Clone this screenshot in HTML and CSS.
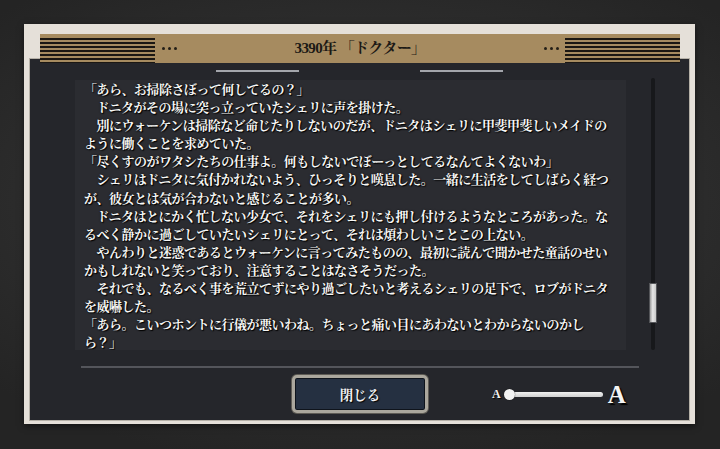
FILE: index.html
```html
<!DOCTYPE html>
<html lang="ja">
<head>
<meta charset="utf-8">
<title>3390年 「ドクター」</title>
<link rel="stylesheet" href="styles.css">
</head>
<body>
<div class="panel">
  <div class="header">
    <div class="stripes"></div>
    <div class="dots"><i></i><i></i><i></i></div>
    <div class="title">3390年 「ドクター」</div>
    <div class="dots"><i></i><i></i><i></i></div>
    <div class="stripes"></div>
  </div>
  <div class="inner">
    <div class="tabs"><span></span><span></span></div>
    <div class="content">
      <div class="textbox">
        <p class="line">「あら、お掃除さぼって何してるの？」</p>
        <p class="line">　ドニタがその場に突っ立っていたシェリに声を掛けた。</p>
        <p class="line">　別にウォーケンは掃除など命じたりしないのだが、ドニタはシェリに甲斐甲斐しいメイドの</p>
        <p class="line">ように働くことを求めていた。</p>
        <p class="line">「尽くすのがワタシたちの仕事よ。何もしないでぼーっとしてるなんてよくないわ」</p>
        <p class="line">　シェリはドニタに気付かれないよう、ひっそりと嘆息した。一緒に生活をしてしばらく経つ</p>
        <p class="line">が、彼女とは気が合わないと感じることが多い。</p>
        <p class="line">　ドニタはとにかく忙しない少女で、それをシェリにも押し付けるようなところがあった。な</p>
        <p class="line">るべく静かに過ごしていたいシェリにとって、それは煩わしいことこの上ない。</p>
        <p class="line">　やんわりと迷惑であるとウォーケンに言ってみたものの、最初に読んで聞かせた童話のせい</p>
        <p class="line">かもしれないと笑っており、注意することはなさそうだった。</p>
        <p class="line">　それでも、なるべく事を荒立てずにやり過ごしたいと考えるシェリの足下で、ロブがドニタ</p>
        <p class="line">を威嚇した。</p>
        <p class="line">「あら。こいつホントに行儀が悪いわね。ちょっと痛い目にあわないとわからないのかし</p>
        <p class="line">ら？」</p>
      </div>
      <div class="scroll"><div class="thumb"></div></div>
    </div>
    <div class="sep"></div>
    <div class="controls">
      <button class="close">閉じる</button>
      <div class="fontsize">
        <span class="a-small">A</span>
        <div class="slider"><span class="knob"></span><span class="bar"></span></div>
        <span class="a-large">A</span>
      </div>
    </div>
  </div>
</div>
</body>
</html>
```
FILE: styles.css
```css
html, body {
  margin: 0;
  padding: 0;
}
body {
  width: 720px;
  height: 449px;
  overflow: hidden;
  background: radial-gradient(ellipse 70% 60% at 50% 45%, #3a3a3a 0%, #2e2e2e 55%, #242424 100%);
  padding: 24px 0 0 24px;
  box-sizing: border-box;
  font-family: "Noto Serif CJK JP", "Noto Sans CJK JP", serif;
}
.panel {
  width: 671px;
  height: 400px;
  box-sizing: border-box;
  background: #e5e0d9;
  padding: 10px 6px 4px 6px;
  box-shadow: 0 2px 6px rgba(0,0,0,0.5);
}
.header {
  position: relative;
  z-index: 1;
  margin: 0 9px 0 10px;
  height: 29px;
  background: #a68b60;
  display: flex;
  align-items: center;
}
.stripes {
  width: 115px;
  height: 29px;
  box-sizing: border-box;
  padding-top: 3px;
  background: repeating-linear-gradient(to bottom, #1b1713 0 2px, transparent 2px 4px);
  background-clip: content-box;
}
.dots {
  display: flex;
  gap: 3px;
  margin: 0 6px 0 7px;
}
.dots i {
  display: block;
  width: 3px;
  height: 3px;
  border-radius: 50%;
  background: #231e17;
}
.title {
  flex: 1;
  text-align: center;
  font-family: "Liberation Serif", "Noto Serif CJK JP", "Noto Sans CJK JP", serif;
  font-weight: 700;
  font-size: 15px;
  letter-spacing: -0.6px;
  color: #1c1915;
  line-height: 29px;
}
.inner {
  margin-top: -4px;
  height: 361px;
  background: #25262b;
  box-shadow: 0 0 0 1px #b5b0a7;
  display: flex;
  flex-direction: column;
}
.tabs {
  margin-top: 11px;
  height: 2px;
  display: flex;
  justify-content: center;
  gap: 121px;
}
.tabs span {
  width: 83px;
  height: 2px;
  background: #a3a5ab;
}
.content {
  margin-top: 6px;
  height: 272px;
  display: flex;
  padding-left: 45px;
}
.textbox {
  margin-top: 2px;
  width: 551px;
  height: 270px;
  box-sizing: border-box;
  padding-left: 9px;
  background: #2b2c31;
  overflow: hidden;
}
.line {
  margin: 0;
  white-space: nowrap;
  font-size: 13px;
  letter-spacing: -0.5px;
  line-height: 18.1px;
  font-weight: 700;
  color: #f7f7f5;
  text-shadow: 1px 1px 1px #000, 0 0 2px rgba(0,0,0,0.8);
}
.scroll {
  margin-left: 23px;
  width: 8px;
  height: 272px;
  display: flex;
  flex-direction: column;
  align-items: center;
  position: relative;
}
.scroll::before {
  content: "";
  position: absolute;
  top: 0;
  bottom: 0;
  left: 2px;
  width: 4px;
  background: #17181b;
  border-radius: 2px;
}
.thumb {
  position: relative;
  margin-top: 205px;
  width: 8px;
  height: 40px;
  box-sizing: border-box;
  border: 1px solid #55565a;
  background: linear-gradient(to right, #9c9c9c, #e6e6e6 45%, #c8c8c8 100%);
}
.sep {
  margin: 16px 0 0 51px;
  width: 558px;
  height: 2px;
  background: #54555b;
}
.controls {
  margin-top: 7px;
  padding-left: 262px;
  display: flex;
  align-items: center;
}
.close {
  width: 136px;
  height: 38px;
  box-sizing: border-box;
  border: 3px solid #aba79d;
  border-radius: 5px;
  background: #253041;
  box-shadow: 0 0 0 1px #5e5b55, inset 0 0 0 1px #0f141c;
  color: #f2f2f2;
  font-family: "Noto Serif CJK JP", "Noto Sans CJK JP", serif;
  font-size: 13.5px;
  font-weight: 700;
  text-shadow: 1px 1px 1px #000;
  padding: 0;
  cursor: pointer;
}
.fontsize {
  margin-left: 64px;
  display: flex;
  align-items: center;
}
.a-small {
  font-family: "Liberation Serif", serif;
  font-weight: 700;
  font-size: 12px;
  color: #f0f0f0;
  text-shadow: 1px 1px 1px #000;
  margin-right: 3px;
}
.slider {
  width: 99px;
  display: flex;
  align-items: center;
}
.knob {
  position: relative;
  z-index: 1;
  width: 11px;
  height: 11px;
  border-radius: 50%;
  background: #f2f2f2;
  box-shadow: 0 0 1px #000;
}
.bar {
  flex: 1;
  height: 5px;
  margin-left: -5px;
  border-radius: 3px;
  background: linear-gradient(#f0f0f0, #cfcfcf);
}
.a-large {
  margin-left: 5px;
  font-family: "Liberation Serif", serif;
  font-weight: 700;
  font-size: 25px;
  line-height: 25px;
  color: #f4f4f4;
  text-shadow: 2px 2px 1px #000;
}
```
